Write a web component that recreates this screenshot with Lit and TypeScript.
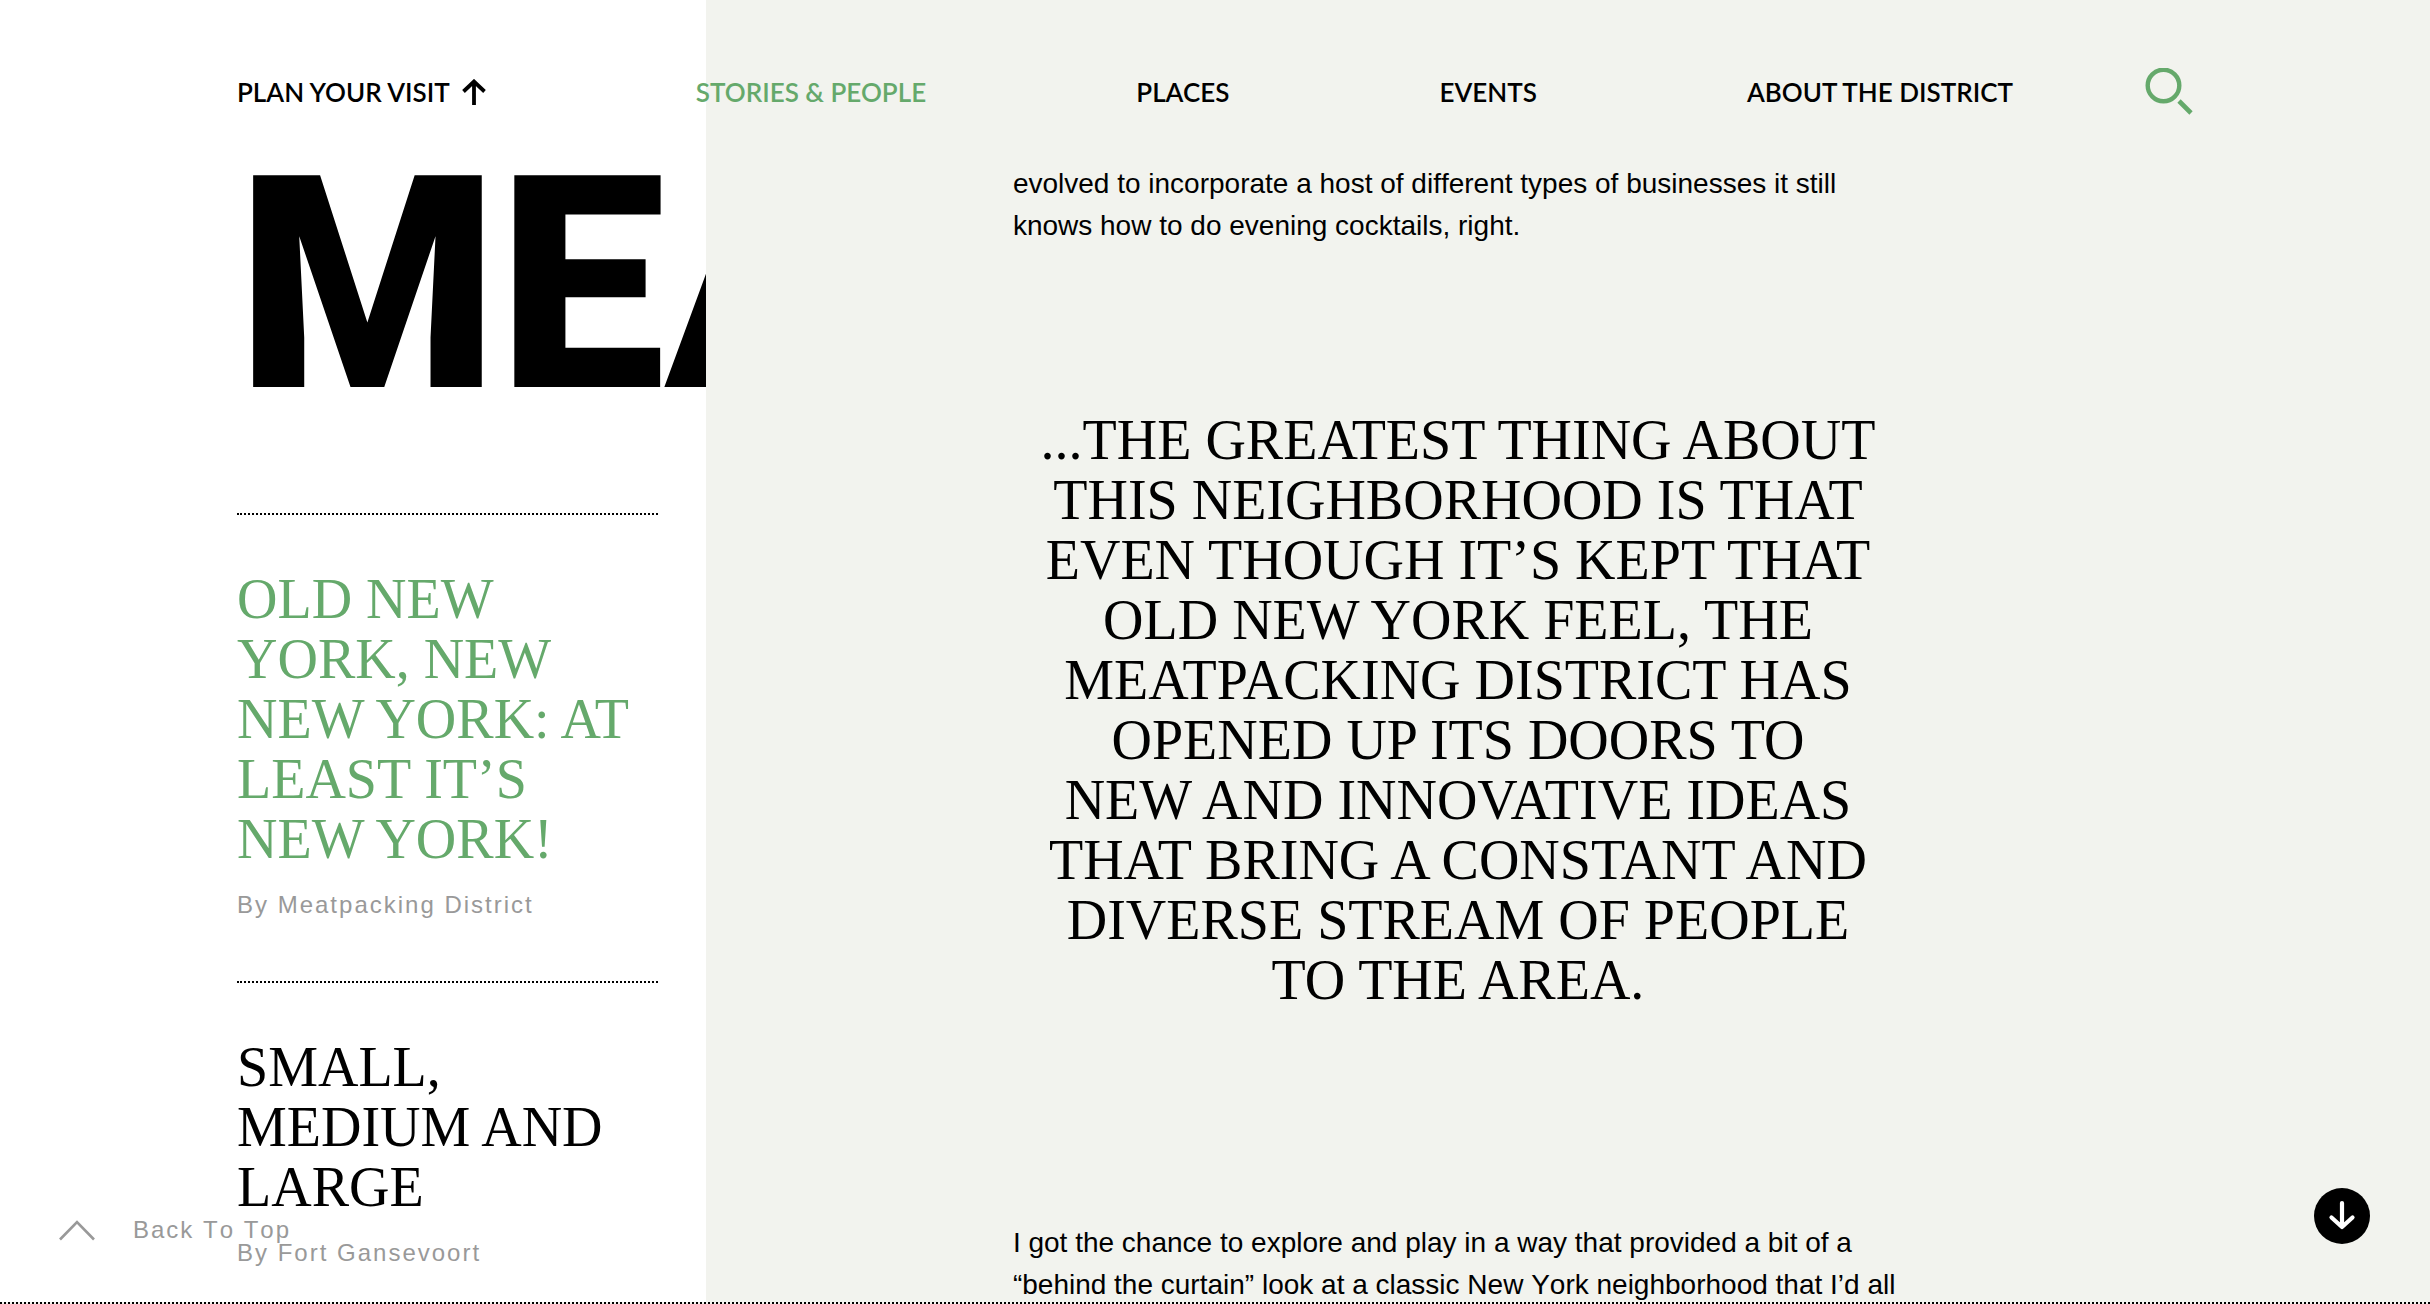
import { LitElement, html, css } from "lit";
import { customElement } from "lit/decorators.js";
import { classMap } from "lit/directives/class-map.js";

interface NavItem {
  label: string;
  href: string;
  active?: boolean;
  arrow?: boolean;
}

interface Story {
  lines: string[];
  author: string;
  active?: boolean;
}

const NAV: NavItem[] = [
  { label: "PLAN YOUR VISIT", href: "#visit", arrow: true },
  { label: "STORIES & PEOPLE", href: "#stories", active: true },
  { label: "PLACES", href: "#places" },
  { label: "EVENTS", href: "#events" },
  { label: "ABOUT THE DISTRICT", href: "#about" },
];

const STORIES: Story[] = [
  {
    lines: ["OLD NEW", "YORK, NEW", "NEW YORK: AT", "LEAST IT’S", "NEW YORK!"],
    author: "By Meatpacking District",
    active: true,
  },
  {
    lines: ["SMALL,", "MEDIUM AND", "LARGE"],
    author: "By Fort Gansevoort",
  },
];

const QUOTE = [
  "...THE GREATEST THING ABOUT",
  "THIS NEIGHBORHOOD IS THAT",
  "EVEN THOUGH IT’S KEPT THAT",
  "OLD NEW YORK FEEL, THE",
  "MEATPACKING DISTRICT HAS",
  "OPENED UP ITS DOORS TO",
  "NEW AND INNOVATIVE IDEAS",
  "THAT BRING A CONSTANT AND",
  "DIVERSE STREAM OF PEOPLE",
  "TO THE AREA.",
];

const lines = (items: string[]) =>
  items.map((line) => html`<span class="line">${line} </span>`);

@customElement("site-header")
export class SiteHeader extends LitElement {
  static styles = css`
    :host {
      display: flex;
      align-items: center;
      padding: 64px 237px 0;
      font-family: Lato, "Liberation Sans", sans-serif;
    }
    .nav {
      flex: 1;
      display: flex;
      justify-content: space-between;
      margin-right: 132px;
    }
    .link {
      display: flex;
      align-items: center;
      gap: 12px;
      color: #000;
      font-size: 26px;
      font-weight: 600;
      line-height: 56px;
      text-decoration: none;
      white-space: nowrap;
    }
    .active {
      color: #65a96b;
    }
    .search {
      display: block;
      padding: 0;
      border: 0;
      background: none;
      line-height: 0;
      cursor: pointer;
    }
  `;

  render() {
    return html`
      <nav class="nav" aria-label="Main">
        ${NAV.map(
          (item) => html`<a
            class=${classMap({ link: true, active: !!item.active })}
            href=${item.href}
            >${item.label}${item.arrow
              ? html`<svg width="24" height="26" viewBox="0 0 24 26" aria-hidden="true">
                  <path
                    d="M12 26V3M1.500 12.500 12 2.500l10.500 10"
                    fill="none"
                    stroke="currentColor"
                    stroke-width="3.800"
                  />
                </svg>`
              : ""}</a
          >`
        )}
      </nav>
      <button class="search" type="button" aria-label="Search">
        <svg width="48" height="48" viewBox="0 0 48 48" aria-hidden="true">
          <g fill="none" stroke="#65a96b">
            <circle cx="18.500" cy="17.500" r="15.800" stroke-width="4.400" />
            <path d="M34 33 46 45" stroke-width="4.600" />
          </g>
        </svg>
      </button>
    `;
  }
}

@customElement("story-list")
export class StoryList extends LitElement {
  static styles = css`
    :host {
      display: block;
      overflow: hidden;
      padding: 180px 48px 0 237px;
      background: #fff;
    }
    .wordmark {
      margin-bottom: 121px;
      font-family: Roboto, "Liberation Sans", sans-serif;
      font-size: 298px;
      font-weight: 900;
      line-height: 212px;
      white-space: nowrap;
    }
    .story {
      padding: 54px 0 57px;
      border-top: 2px dotted #000;
    }
    .title {
      margin: 0 0 17px;
      font-family: "Liberation Serif", serif;
      font-size: 56px;
      font-weight: 400;
      line-height: 60px;
    }
    .title-link {
      color: #000;
      text-decoration: none;
    }
    .active .title-link {
      color: #65a96b;
    }
    .line {
      display: block;
      white-space: nowrap;
    }
    .author {
      margin: 0;
      color: #999;
      font-family: "Liberation Sans", sans-serif;
      font-size: 24px;
      font-kerning: none;
      letter-spacing: 2px;
      line-height: 38px;
    }
  `;

  render() {
    return html`
      <div class="wordmark">MEA</div>
      ${STORIES.map(
        (story) => html`<article class=${classMap({ story: true, active: !!story.active })}>
          <h2 class="title"><a class="title-link" href="#story">${lines(story.lines)}</a></h2>
          <p class="author">${story.author}</p>
        </article>`
      )}
    `;
  }
}

@customElement("story-body")
export class StoryBody extends LitElement {
  static styles = css`
    :host {
      display: block;
      overflow: hidden;
      padding: 163px 527px 0 307px;
      background: #f2f3ee;
    }
    .text {
      margin: 0;
      font-family: "Liberation Sans", sans-serif;
      font-size: 28px;
      font-kerning: none;
      line-height: 42px;
    }
    .quote {
      margin: 163px 0 212px;
      font-family: "Liberation Serif", serif;
      font-size: 56px;
      line-height: 60px;
      text-align: center;
    }
    .line {
      display: block;
      white-space: nowrap;
    }
  `;

  render() {
    return html`
      <p class="text">
        ${lines([
          "evolved to incorporate a host of different types of businesses it still",
          "knows how to do evening cocktails, right.",
        ])}
      </p>
      <blockquote class="quote">${lines(QUOTE)}</blockquote>
      <p class="text">
        ${lines([
          "I got the chance to explore and play in a way that provided a bit of a",
          "“behind the curtain” look at a classic New York neighborhood that I’d all",
        ])}
      </p>
    `;
  }
}

@customElement("app-root")
export class AppRoot extends LitElement {
  static styles = css`
    :host {
      position: relative;
      display: flex;
      flex-direction: column;
      height: 100vh;
      overflow: hidden;
      background: #f2f3ee;
      color: #000;
    }
    .columns {
      flex: 1;
      min-height: 0;
      display: grid;
      grid-template-columns: 29.05% minmax(0, 1fr);
      grid-template-rows: minmax(0, 1fr);
    }
    .header {
      position: absolute;
      top: 0;
      left: 0;
      right: 0;
      z-index: 1;
    }
    .rule {
      border-bottom: 2px dotted #000;
    }
    .back {
      position: absolute;
      left: 58px;
      bottom: 56px;
      display: flex;
      align-items: center;
      gap: 37px;
      color: #999;
      font-family: "Liberation Sans", sans-serif;
      font-size: 24px;
      font-kerning: none;
      letter-spacing: 2px;
      line-height: 36px;
      text-decoration: none;
    }
    .next {
      position: absolute;
      right: 60px;
      bottom: 60px;
      padding: 0;
      border: 0;
      background: none;
      line-height: 0;
      cursor: pointer;
    }
  `;

  render() {
    return html`
      <site-header class="header"></site-header>
      <main class="columns">
        <story-list></story-list>
        <story-body></story-body>
      </main>
      <div class="rule"></div>
      <a class="back" href="#top">
        <svg width="38" height="22" viewBox="0 0 38 22" aria-hidden="true">
          <path d="M2 20.500 19 3l17 17.500" fill="none" stroke="currentColor" stroke-width="2.600" />
        </svg>
        Back To Top
      </a>
      <button class="next" type="button" aria-label="Scroll down">
        <svg width="56" height="56" viewBox="0 0 56 56" aria-hidden="true">
          <circle cx="28" cy="28" r="28" />
          <path
            d="M28 15v24M17.500 29.500 28 39l10.500-9.500"
            fill="none"
            stroke="#fff"
            stroke-width="4.200"
            stroke-linecap="round"
            stroke-linejoin="round"
          />
        </svg>
      </button>
    `;
  }
}
